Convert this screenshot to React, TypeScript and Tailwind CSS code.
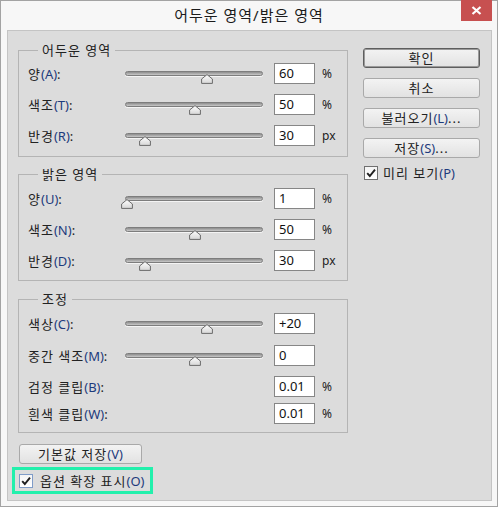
import React from "react";

const font = { fontFamily: '"Noto Sans", "Noto Sans CJK KR", sans-serif' };

type Row = {
  name: string;
  key: string;
  value: string;
  unit?: string;
  thumb?: number; // thumb centre, px from track start
  gap: string;
};

const Accel = ({ k }: { k: string }) => <span className="text-[#1d3b7c] tracking-normal">({k})</span>;

const Slider = ({ at }: { at: number }) => (
  <div className="relative w-[138px] h-[21px]">
    <div className="mt-[8px] h-[5px] rounded-full border border-[#7d7d7d] bg-gradient-to-b from-[#8d8d8d] to-[#c9c9c9] shadow-[0_1px_0_#f4f4f4]" />
    <svg
      className="absolute top-[11px]"
      style={{ left: at - 6 }}
      width="12"
      height="10"
      viewBox="0 0 12 10"
    >
      <defs>
        <linearGradient id="thumb" x1="0" y1="0" x2="0" y2="1">
          <stop offset="0" stopColor="#ffffff" />
          <stop offset="1" stopColor="#d6d6d6" />
        </linearGradient>
      </defs>
      <path d="M6 0.6 L11.4 5 L11.4 9.4 L0.6 9.4 L0.6 5 Z" fill="url(#thumb)" stroke="#6b6b6b" strokeLinejoin="round" />
    </svg>
  </div>
);

const Field = ({ row }: { row: Row }) => (
  <div className={`flex items-center h-[21px] pl-[9px] ${row.gap}`}>
    <div className="w-[97px] text-[13px] leading-[16px] text-[#222] whitespace-nowrap tracking-[1px]">
      {row.name}
      <Accel k={row.key} />:
    </div>
    {row.thumb !== undefined ? <Slider at={row.thumb} /> : <div className="w-[138px]" />}
    <div className="ml-[11px] w-[41px] h-[21px] bg-white border border-[#868686] pl-[4px] text-[13px] leading-[19px] text-[#111]">
      {row.value}
    </div>
    {row.unit && <div className="ml-[7px] text-[12px] leading-[16px] text-[#222]">{row.unit}</div>}
  </div>
);

const Group = ({ title, rows, pad }: { title: string; rows: Row[]; pad: string }) => (
  <fieldset className={`w-[330px] border border-[#b4b4b4] ${pad}`}>
    <legend className="ml-[19px] px-[4px] text-[13px] leading-[16px] text-[#222] tracking-[1px]">{title}</legend>
    {rows.map((r) => (
      <Field key={r.key} row={r} />
    ))}
  </fieldset>
);

const Check = ({ blue }: { blue?: boolean }) => (
  <div
    className={`w-[14px] h-[14px] border flex items-center justify-center bg-gradient-to-b from-[#f4f4f4] to-[#ffffff] ${
      blue ? "border-[#7f9cc8]" : "border-[#707070]"
    }`}
  >
    <svg width="12" height="12" viewBox="0 0 12 12">
      <path d="M2.2 6.2 L4.8 9 L10 2.6" fill="none" stroke="#1f1f1f" strokeWidth="1.9" />
    </svg>
  </div>
);

const Button = ({ children, main, w }: { children: React.ReactNode; main?: boolean; w: string }) => (
  <div
    className={`${w} h-[20px] flex items-center justify-center rounded-[3px] bg-gradient-to-b from-[#f3f3f3] to-[#e2e2e2] text-[13px] leading-[16px] text-[#222] tracking-[1px] ${
      main ? "border border-[#5e5e5e] shadow-[inset_0_0_0_1px_#9a9a9a]" : "border border-[#a9a9a9]"
    }`}
  >
    {children}
  </div>
);

const dark: Row[] = [
  { name: "양", key: "A", value: "60", unit: "%", thumb: 82, gap: "" },
  { name: "색조", key: "T", value: "50", unit: "%", thumb: 70, gap: "mt-[10px]" },
  { name: "반경", key: "R", value: "30", unit: "px", thumb: 20, gap: "mt-[10px]" },
];

const light: Row[] = [
  { name: "양", key: "U", value: "1", unit: "%", thumb: 2, gap: "" },
  { name: "색조", key: "N", value: "50", unit: "%", thumb: 70, gap: "mt-[10px]" },
  { name: "반경", key: "D", value: "30", unit: "px", thumb: 20, gap: "mt-[10px]" },
];

const adjust: Row[] = [
  { name: "색상", key: "C", value: "+20", thumb: 82, gap: "" },
  { name: "중간 색조", key: "M", value: "0", thumb: 70, gap: "mt-[11px]" },
  { name: "검정 클립", key: "B", value: "0.01", unit: "%", gap: "mt-[10px]" },
  { name: "흰색 클립", key: "W", value: "0.01", unit: "%", gap: "mt-[6px]" },
];

export default function App() {
  return (
    <div style={font} className="w-[498px] h-[507px] border border-[#a3a3a3] bg-[#f7f7f7] flex flex-col">
      {/* title bar */}
      <div className="relative h-[29px] flex items-center justify-center">
        <span className="text-[15px] leading-[20px] text-[#1b1b1b] -mt-[1px] tracking-[1px]">어두운 영역/밝은 영역</span>
        <div className="absolute top-[-1px] right-[5px] w-[31px] h-[21px] bg-[#c75050] flex items-center justify-center">
          <svg width="11" height="9" viewBox="0 0 11 9">
            <path d="M1.5 1 L9.5 8 M9.5 1 L1.5 8" stroke="#fff" strokeWidth="2.2" />
          </svg>
        </div>
      </div>

      {/* client */}
      <div className="pl-[6px] pr-[5px] pb-[5px] flex-1 flex">
        <div className="flex-1 border border-[#c4c4c4] bg-[#dcdcdc] flex">
          <div className="pl-[10px] pt-[11px] flex flex-col">
            <Group title="어두운 영역" rows={dark} pad="pt-[5px] pb-[10px]" />
            <div className="mt-[9px]">
              <Group title="밝은 영역" rows={light} pad="pt-[6px] pb-[9px]" />
            </div>
            <div className="mt-[10px]">
              <Group title="조정" rows={adjust} pad="pt-[6px] pb-[8px]" />
            </div>
            <div className="mt-[11px] ml-[1px]">
              <Button w="w-[123px]">
                기본값 저장<Accel k="V" />
              </Button>
            </div>
            <div className="mt-[3px] -ml-[6px] w-[141px] h-[27px] border-[3px] border-[#22f0ac] flex items-center pl-[4px]">
              <Check blue />
              <span className="ml-[7px] text-[13px] leading-[16px] text-[#222] whitespace-nowrap tracking-[1px]">
                옵션 확장 표시<Accel k="O" />
              </span>
            </div>
          </div>

          <div className="ml-[15px] pt-[17px] flex flex-col gap-[10px]">
            <Button main w="w-[117px]">확인</Button>
            <Button w="w-[117px]">취소</Button>
            <Button w="w-[117px]">
              불러오기<Accel k="L" />...
            </Button>
            <Button w="w-[117px]">
              저장<Accel k="S" />...
            </Button>
            <div className="-mt-[3px] ml-[1px] h-[16px] flex items-center">
              <Check />
              <span className="ml-[5px] text-[13px] leading-[16px] text-[#222] tracking-[1px]">
                미리 보기<Accel k="P" />
              </span>
            </div>
          </div>
        </div>
      </div>
    </div>
  );
}
